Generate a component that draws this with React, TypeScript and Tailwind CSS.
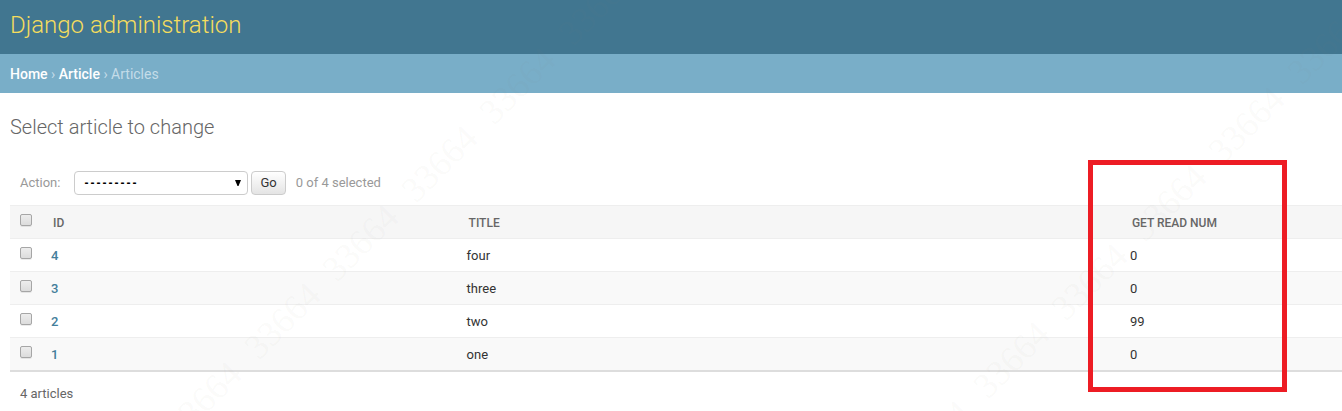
import React, { useState } from 'react';

type Article = { id: number; title: string; readNum: number };

const articles: Article[] = [
  { id: 4, title: 'four', readNum: 0 },
  { id: 3, title: 'three', readNum: 0 },
  { id: 2, title: 'two', readNum: 99 },
  { id: 1, title: 'one', readNum: 0 },
];

const stampOffsets = [0, 79, 157, 236, 314, 393];

function WatermarkLine({ x, y }: { x: number; y: number }) {
  return (
    <>
      {stampOffsets.map((d) => (
        <text key={d} transform={`translate(${x + d} ${y - d}) rotate(-45)`}>
          33664
        </text>
      ))}
    </>
  );
}

function Watermark() {
  return (
    <svg
      aria-hidden="true"
      className="pointer-events-none absolute inset-0 h-full w-full fill-[#8c8878]/5 font-['Liberation_Serif',serif] text-[36px]"
    >
      <WatermarkLine x={180} y={440} />
      <WatermarkLine x={909} y={479} />
    </svg>
  );
}

function Checkbox({ label, checked, onChange }: { label: string; checked: boolean; onChange: () => void }) {
  return (
    <input
      type="checkbox"
      aria-label={label}
      checked={checked}
      onChange={onChange}
      className="block size-3 appearance-none rounded-[2px] border border-[#a6a6a6] bg-linear-to-b from-[#ededed] to-[#dcdcdc] shadow-[0_1px_0_#00000014] checked:bg-[#417690] checked:bg-none"
    />
  );
}

export default function App() {
  const [selected, setSelected] = useState<number[]>([]);
  const allSelected = selected.length === articles.length;
  const toggle = (id: number) =>
    setSelected(selected.includes(id) ? selected.filter((s) => s !== id) : [...selected, id]);

  return (
    <div className="relative overflow-hidden bg-white font-[Roboto,'Liberation_Sans',sans-serif] text-[13px] leading-4 text-[#333]">
      <header className="bg-[#417690] px-2.5 pt-2.5 pb-3.5">
        <h1 className="text-2xl leading-[30px] font-light text-[#f5dd5d]">
          <a href="#home">Django administration</a>
        </h1>
      </header>
      <nav aria-label="Breadcrumbs" className="bg-[#79aec8] px-2.5 pt-3 pb-[11px] text-sm leading-4 text-[#c4dce8]">
        <a href="#home" className="font-medium text-white">Home</a> ›{' '}
        <a href="#article" className="font-medium text-white">Article</a> › Articles
      </nav>
      <main className="pt-5 pb-2.5 pl-2.5">
        <h2 className="text-xl leading-7 font-light text-[#666]">Select article to change</h2>
        <form className="mt-[30px] flex h-6 items-center pl-2.5 text-[#999]" onSubmit={(e) => e.preventDefault()}>
          <label htmlFor="action">Action:</label>
          <span className="relative ml-3.5 block">
            <select
              id="action"
              className="block h-6 w-[174px] appearance-none rounded-[4px] border border-[#ccc] bg-white pl-2 font-['DejaVu_Sans_Mono',monospace] text-[10px] leading-5 font-bold text-black"
            >
              <option value="">---------</option>
              <option value="delete">Delete selected articles</option>
            </select>
            <svg aria-hidden="true" viewBox="0 0 6 6" className="pointer-events-none absolute top-[9px] right-[7px] size-1.5 fill-black">
              <path d="M0 0h6L3.5 6h-1z" />
            </svg>
          </span>
          <button
            type="submit"
            className="ml-[3px] h-6 rounded-[4px] border border-[#ccc] bg-linear-to-b from-white to-[#e4e4e4] px-2 text-[#333]"
          >
            Go
          </button>
          <span className="ml-2.5">{selected.length} of 4 selected</span>
        </form>
        <table className="mt-2.5 w-full table-fixed border-collapse text-left">
          <colgroup>
            <col className="w-[33px]" />
            <col className="w-[31.2%]" />
            <col className="w-[49.8%]" />
            <col />
          </colgroup>
          <thead>
            <tr className="h-[33px] border-y border-[#eee] bg-[#f6f6f6] text-xs text-[#666]">
              <th className="px-2.5 pb-1">
                <Checkbox
                  label="Select all articles"
                  checked={allSelected}
                  onChange={() => setSelected(allSelected ? [] : articles.map((a) => a.id))}
                />
              </th>
              <th className="px-2.5 pt-0.5 font-medium">ID</th>
              <th className="px-2.5 pt-0.5 font-medium">TITLE</th>
              <th className="relative px-2.5 pt-0.5 font-medium">
                GET READ NUM
                <div className="pointer-events-none absolute -top-[46px] -left-[34px] z-10 h-[232px] w-[199px] border-5 border-[#ed1c24]" />
              </th>
            </tr>
          </thead>
          <tbody>
            {articles.map((a) => (
              <tr key={a.id} className="h-[33px] border-b border-[#eee] last:border-b-2 last:border-[#ddd] even:bg-[#f9f9f9]">
                <td className="px-2.5 pb-1">
                  <Checkbox label={`Select ${a.title}`} checked={selected.includes(a.id)} onChange={() => toggle(a.id)} />
                </td>
                <th scope="row" className="px-2 pt-0.5 font-medium text-[#447e9b]">
                  <a href={`#article-${a.id}`}>{a.id}</a>
                </th>
                <td className="px-2 pt-0.5">{a.title}</td>
                <td className="px-2 pt-0.5">{a.readNum}</td>
              </tr>
            ))}
          </tbody>
        </table>
        <p className="mt-3.5 pl-2.5 text-[#666]">4 articles</p>
      </main>
      <Watermark />
    </div>
  );
}
